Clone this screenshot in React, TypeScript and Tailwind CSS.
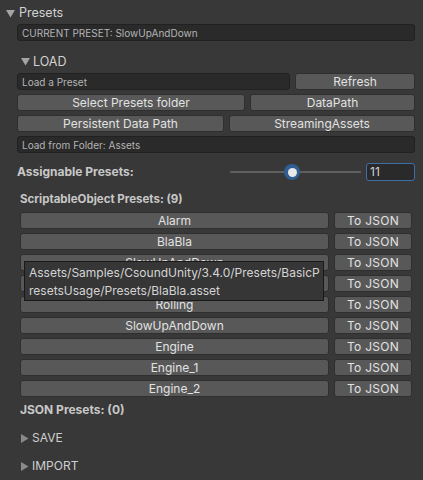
import React from "react";

const Tri = ({ open }: { open: boolean }) =>
  open ? (
    <svg width="9" height="8" viewBox="0 0 9 8" className="shrink-0">
      <polygon points="0,0 9,0 4.5,7.5" fill="#a4a4a4" />
    </svg>
  ) : (
    <svg width="8" height="9" viewBox="0 0 8 9" className="shrink-0">
      <polygon points="0,0 7.5,4.5 0,9" fill="#8a8a8a" />
    </svg>
  );

const Btn = ({ children, className = "" }: { children: React.ReactNode; className?: string }) => (
  <div
    className={
      "h-[17px] flex items-center justify-center rounded-[3px] bg-[#585858] border border-[#2f2f2f] text-[12px] text-[#e2e2e2] leading-none " +
      className
    }
  >
    {children}
  </div>
);

const Field = ({ children, className = "" }: { children: React.ReactNode; className?: string }) => (
  <div
    className={
      "h-[17px] flex items-center px-[4px] rounded-[3px] bg-[#2a2a2a] border border-[#212121] text-[10px] text-[#b4b4b4] leading-none " +
      className
    }
  >
    {children}
  </div>
);

const presets = ["Alarm", "BlaBla", "SlowUpAndDown", "Rolling", "Rolling", "SlowUpAndDown", "Engine", "Engine_1", "Engine_2"];

export default function App() {
  return (
    <div
      className="relative w-[423px] h-[480px] bg-[#383838] overflow-hidden text-[#c8c8c8]"
      style={{ fontFamily: "Inter, 'Noto Sans', sans-serif" }}
    >
      <div className="flex flex-col">
        <div className="h-[17px] mt-[5px] flex items-center pl-[6px] gap-[4px]">
          <Tri open />
          <span className="text-[12.5px] text-[#d2d2d2]">Presets</span>
        </div>
        <div className="pl-[17px] pr-[8px] mt-[2px]">
          <Field>CURRENT PRESET: SlowUpAndDown</Field>
        </div>
        <div className="h-[16px] mt-[13px] flex items-center pl-[21px] gap-[3px]">
          <Tri open />
          <span className="text-[12.5px] text-[#d2d2d2]">LOAD</span>
        </div>
        <div className="pl-[17px] pr-[8px] mt-[3px] flex flex-col gap-[4px]">
          <div className="flex gap-[5px]">
            <Field className="w-[273px]">Load a Preset</Field>
            <Btn className="flex-1">Refresh</Btn>
          </div>
          <div className="flex gap-[5px]">
            <Btn className="w-[228px]">Select Presets folder</Btn>
            <Btn className="flex-1">DataPath</Btn>
          </div>
          <div className="flex gap-[5px]">
            <Btn className="w-[207px]">Persistent Data Path</Btn>
            <Btn className="flex-1">StreamingAssets</Btn>
          </div>
          <Field>Load from Folder: Assets</Field>
        </div>
        <div className="pl-[17px] pr-[8px] mt-[10px] h-[18px] flex items-center">
          <span className="w-[213px] text-[12px] font-bold text-[#c8c8c8]">Assignable Presets:</span>
          <div className="relative w-[131px] h-[18px] flex items-center">
            <div className="w-full h-[2px] bg-[#5e5e5e]" />
            <div className="absolute left-[54px] top-[1px] w-[16px] h-[16px] rounded-full bg-[#2f5e92] flex items-center justify-center">
              <div className="w-[9px] h-[9px] rounded-full bg-[#e8e8e8]" />
            </div>
          </div>
          <div className="ml-[5px] flex-1 h-[18px] flex items-center px-[3px] rounded-[3px] bg-[#2a2a2a] border border-[#3d6ea8] text-[12px] text-[#d2d2d2]">
            11
          </div>
        </div>
        <div className="pl-[20px] mt-[11px] h-[16px] flex items-center text-[11.5px] font-bold text-[#c8c8c8]">
          ScriptableObject Presets: (9)
        </div>
        <div className="pl-[20px] pr-[11px] mt-[4px] flex flex-col gap-[4px]">
          {presets.map((p, i) => (
            <div key={i} className="flex gap-[5px]">
              <Btn className="w-[309px]">{p}</Btn>
              <Btn className="flex-1 tracking-[0.3px]">To JSON</Btn>
            </div>
          ))}
        </div>
        <div className="pl-[20px] mt-[5px] h-[16px] flex items-center text-[12px] font-bold text-[#c8c8c8]">
          JSON Presets: (0)
        </div>
        <div className="h-[16px] mt-[12px] flex items-center pl-[21px] gap-[3px]">
          <Tri open={false} />
          <span className="text-[12px] text-[#cfcfcf]">SAVE</span>
        </div>
        <div className="h-[16px] mt-[12px] flex items-center pl-[21px] gap-[3px]">
          <Tri open={false} />
          <span className="text-[12px] text-[#cfcfcf]">IMPORT</span>
        </div>
      </div>
      <div className="absolute left-[24px] top-[261px] w-[300px] h-[40px] bg-[#363636] border border-[#191919] px-[4px] pt-[2px] text-[12px] leading-[18px] text-[#d4d4d4]">
        Assets/Samples/CsoundUnity/3.4.0/Presets/BasicP
        <br />
        resetsUsage/Presets/BlaBla.asset
      </div>
    </div>
  );
}
